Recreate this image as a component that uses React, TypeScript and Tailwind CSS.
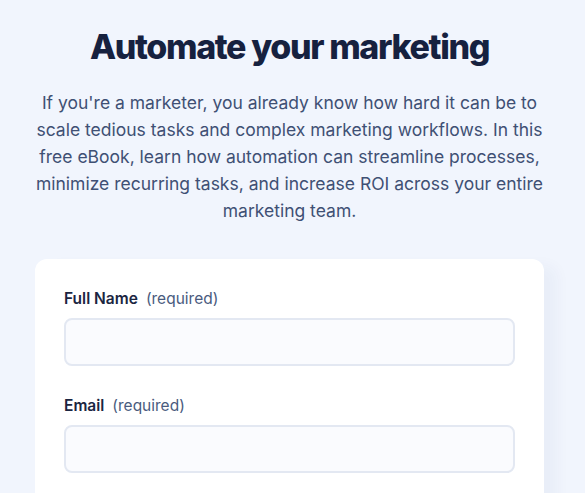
export default function App() {
  return (
    <div
      className="min-h-screen bg-[#f1f5fd] flex flex-col items-center pt-[25px] pr-[6px]"
      style={{ fontFamily: "Inter, 'Noto Sans', sans-serif" }}
    >
      {/* Hero */}
      <h1 className="text-[34px] leading-[44px] font-extrabold tracking-[-0.04em] text-[#16213f]">
        Automate your marketing
      </h1>
      <p className="mt-[20px] w-[520px] text-center text-[17.5px] leading-[27px] text-[#3f5074]">
        If you're a marketer, you already know how hard it can be to scale tedious tasks and complex
        marketing workflows. In this free eBook, learn how automation can streamline processes,
        minimize recurring tasks, and increase ROI across your entire marketing team.
      </p>

      {/* Form card */}
      <form className="mt-[35px] w-[509px] bg-white rounded-xl shadow-[14px_6px_14px_rgba(40,60,120,0.035)] px-[29px] pt-[30px] pb-8 flex flex-col gap-[30px]">
        <div className="flex flex-col gap-[9px]">
          <label className="text-[15.5px] leading-[20px] text-[#1b2541]">
            <span className="font-semibold">Full Name</span>
            <span className="ml-[8px] text-[#4a5b7e]">(required)</span>
          </label>
          <input
            type="text"
            className="h-[48px] w-full rounded-lg border-2 border-[#e3e8f2] bg-[#fafbfe] px-3 outline-none"
          />
        </div>
        <div className="flex flex-col gap-[9px]">
          <label className="text-[15.5px] leading-[20px] text-[#1b2541]">
            <span className="font-semibold">Email</span>
            <span className="ml-[8px] text-[#4a5b7e]">(required)</span>
          </label>
          <input
            type="email"
            className="h-[48px] w-full rounded-lg border-2 border-[#e3e8f2] bg-[#fafbfe] px-3 outline-none"
          />
        </div>
      </form>
    </div>
  );
}
